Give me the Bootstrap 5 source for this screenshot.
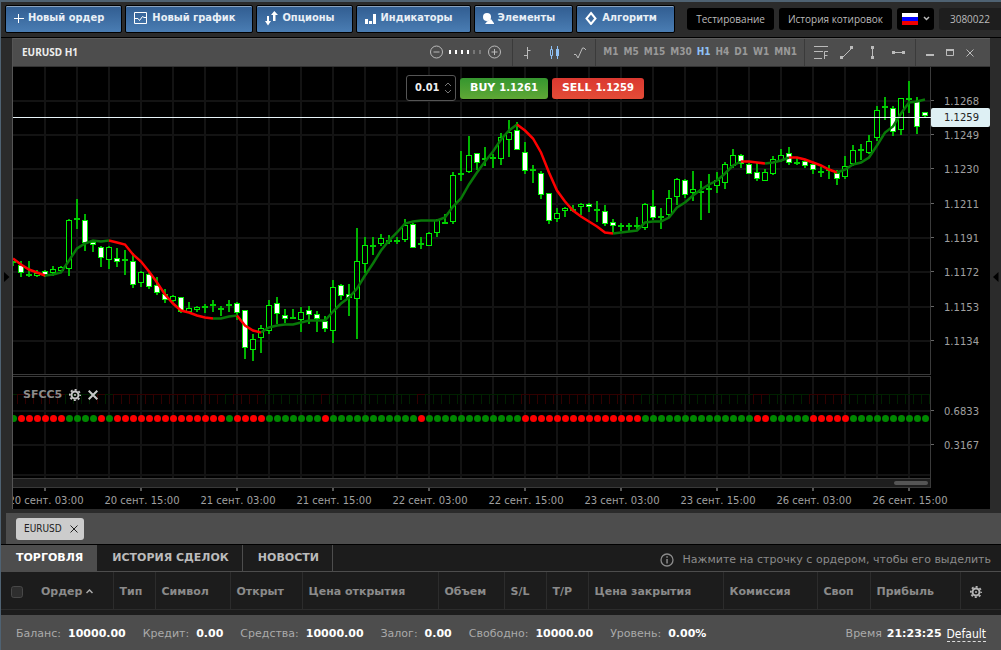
<!DOCTYPE html>
<html lang="ru">
<head>
<meta charset="utf-8">
<meta name="viewport" content="width=device-width, initial-scale=1">
<title>EURUSD H1</title>
<link href="https://cdn.jsdelivr.net/npm/bootstrap@5.3.0/dist/css/bootstrap.min.css" rel="stylesheet">
<style>
  :root { --wide: "DejaVu Sans", Verdana, sans-serif; --cond: "DejaVu Sans Condensed", Tahoma, sans-serif; --open: "Open Sans", sans-serif; }
  body { font: 11px/16px var(--wide); background: #2b2b2b; color: #aaa; border-top: 2px solid #4f6272; border-left: 1px solid #4f6272; overflow: hidden; }
  button { font: inherit; }
  svg { display: block; flex: none; }
  .plain { background: none; border: 0; padding: 0; color: inherit; }

  .topbar { height: 36px; border-bottom: 1px solid #000; padding: 3px 0 5px 4px; gap: 3px; }
  .btn-tool { --bs-btn-border-radius: 2px; height: 28px; padding: 0 17px 1px 8px; gap: 4px; color: #e8eff6; border: 1px solid #000; box-shadow: inset 0 1px 0 #8aa3bf;
    background: linear-gradient(#315d91, #4a7db3); font: bold 11px/16px var(--cond); }
  .btn-tool:hover { color: #fff; border-color: #000; }
  .btn-dark2 { height: 22px; padding: 0 9px; background: #000; color: #bbb; font: 10px/16px var(--open); border: 0; border-radius: 3px; }
  .btn-dark2:hover { background: #111; color: #ddd; }
  .btn-dark2.account { background: #1e1e1e; padding: 0 11px; border-radius: 3px 0 0 3px; }
  .links { gap: 5px; }

  .workspace { min-height: 0; }
  .rail { width: 11px; padding-top: 7px; }
  .stage { border-left: 1px solid #555; background: #000; }
  .toolbar { height: 29px; background: #4d4d4d; border-bottom: 1px solid #333; border-top: 1px solid #5c5c5c; padding-left: 9px; }
  .toolbar h1 { font: bold 10px/16px "Noto Sans", sans-serif; color: #eee; padding-bottom: 1px; }
  .zoomer { padding-right: 6px; }
  .grp { border-left: 1px solid #3a3a3a; padding-right: 2px; padding-left: 2px; }
  .grp.drawing { padding: 0 3px 0 3px; }
  .grp.windows { padding: 0 10px 0 4px; }
  .cell { width: 26px; display: flex; align-items: center; justify-content: center; }
  .cell.win { width: 20px; }
  .grp.frames { font: bold 10px/16px var(--cond); color: #999; gap: 5px; padding: 0 7px 1px 7px; }
  .frames .on { color: #8fc1f5; }
  .chart { min-height: 0; }
  .chart text { font: 10px var(--wide); fill: #a0a0a0; }
  .trade { position: absolute; top: 8px; right: 346px; gap: 4px; }
  .lot { width: 50px; height: 26px; background: #000; border: 1px solid #555; border-radius: 3px; padding: 0 4px 0 8px; }
  .lot input { width: 28px; background: none; border: 0; padding: 0; color: #eee; font: bold 11px/16px var(--cond); }
  .deal { height: 21px; padding: 0 10px; border: 0; border-radius: 3px; color: #fff; font: bold 10px/16px var(--wide); gap: 4px; }
  .deal b { font-size: 11px; }
  .buy { background: linear-gradient(#35962f, #60a836); }
  .sell { background: linear-gradient(#da3830, #e44c37); }
  .study { position: absolute; top: 320px; left: 10px; font-weight: bold; color: #8b8b8b; gap: 7px; }

  .docs { height: 31px; margin: 4px 0 0 5px; padding: 0 10px; background: #4d4d4d; }
  .doc { height: 22px; padding: 0 6px 0 8px; gap: 8px; background: #ccc; color: #222; border-radius: 3px; font: 10px/16px var(--cond); }
  .panel { background: #1c1c1c; border-top: 1px solid #000; }
  .panel .nav { height: 27px; border-bottom: 1px solid #4d4d4d; }
  .panel .nav-link { height: 26px; padding: 5px 13px 5px 15px; border-right: 1px solid #4d4d4d; border-radius: 0; color: #bbb; font: bold 11px/16px var(--wide); }
  .panel .nav-link.active { background: #4d4d4d; color: #fff; }
  .hint { gap: 9px; padding-right: 10px; color: #8b8b8b; padding-top: 3px; }
  .orders { table-layout: fixed; width: 100%; }
  .orders th { height: 37px; padding: 2px 0 0 6px; border-right: 1px solid #2c2c2c; color: #8b8b8b; white-space: nowrap; vertical-align: middle; }
  .orders th:last-child { border-right: 0; padding-left: 5px; }
  .orders input { display: block; width: 12px; height: 12px; margin: 0 0 0 4px; background-color: #2e2e2e; border: 1px solid #484848; border-radius: 2px; }
  .gapline { height: 6px; background: #1c1c1c; border-top: 1px solid #2c2c2c; }
  .status { height: 35px; background: #4d4d4d; padding: 3px 15px 0; gap: 17px; }
  .status b { color: #fff; margin-left: 7px; }
  .status .clock { margin-left: 5px; }
  .layout { color: #fff; font: 12px/14px var(--cond); border-bottom: 1px dashed #ddd; margin-left: 5px; text-decoration: none; }
</style>
</head>
<body class="vh-100 d-flex flex-column">

<header class="topbar d-flex align-items-center flex-shrink-0">
  <button class="btn btn-tool d-flex align-items-center"><svg width="10" height="12"><path d="M0 6.5h10M4.5 2v9" stroke="#fff"/></svg>Новый ордер</button>
  <button class="btn btn-tool d-flex align-items-center"><svg width="14" height="12"><path d="M.5.5h12v11H.5zM1 6.5h3l1.500 2 3-4 1.500 1h2" fill="none" stroke="#fff"/></svg>Новый график</button>
  <button class="btn btn-tool d-flex align-items-center"><svg width="13" height="16"><path d="M2 6h2v5h2l-3 4.500-3-4.500h2zM8 11h2.500V5H13L9.300 1 6 5h2z" fill="#fff"/></svg>Опционы</button>
  <button class="btn btn-tool d-flex align-items-center"><svg width="12" height="12"><path d="M0 7h3v5H0zM4 9h3v3H4zM8 2h3v10H8z" fill="#fff"/></svg>Индикаторы</button>
  <button class="btn btn-tool d-flex align-items-center"><svg width="11" height="12"><circle cx="4" cy="5" r="4" fill="#fff"/><path d="M8 7l3.500 5H2l2-2.500z" fill="#fff"/></svg>Элементы</button>
  <button class="btn btn-tool d-flex align-items-center"><svg width="13" height="14"><path d="M6 2l4.500 5.500L6 13 1.500 7.500z" fill="none" stroke="#fff" stroke-width="2"/></svg>Алгоритм</button>
  <div class="links d-flex ms-auto align-items-center">
    <button class="btn-dark2">Тестирование</button>
    <button class="btn-dark2">История котировок</button>
    <button class="btn-dark2 d-flex align-items-center gap-1 px-1" aria-label="Русский"><svg width="18" height="12"><path d="M1 0h16v4H1z" fill="#fff"/><path d="M1 4h16v4H1z" fill="#00f"/><path d="M1 8h16v4H1z" fill="#e00"/></svg><svg width="7" height="5"><path d="M1 1l2.500 2.500L6 1" fill="none" stroke="#bbb" stroke-width="1.500"/></svg></button>
    <button class="btn-dark2 account">3080022</button>
  </div>
</header>

<main class="workspace d-flex flex-grow-1">
  <button class="rail plain flex-shrink-0 d-flex align-items-center" aria-label="Развернуть слева"><svg width="9" height="10"><path d="M3 0l5.500 5L3 10z" fill="#000"/></svg></button>
  <section class="stage flex-grow-1 d-flex flex-column">
    <div class="toolbar d-flex flex-shrink-0">
      <h1 class="m-0 me-auto align-self-center">EURUSD H1</h1>
      <div class="zoomer d-flex align-items-center gap-1">
        <button class="plain" aria-label="Уменьшить"><svg width="16" height="15"><g fill="none" stroke="#bbb"><circle cx="7.500" cy="7" r="6"/><path d="M4.500 7h6"/></g></svg></button>
        <svg width="33" height="5"><path d="M0 0h2v4H0zM6 0h2v4H6zM12 0h2v4h-2zM18 0h2v4h-2z" fill="#fff"/><path d="M24 0h2v4h-2zM30 0h2v4h-2z" fill="#777"/></svg>
        <button class="plain pe-1" aria-label="Увеличить"><svg width="16" height="15"><g fill="none" stroke="#bbb"><circle cx="8.500" cy="7" r="6"/><path d="M5.500 7h6M8.500 4v6"/></g></svg></button>
      </div>
      <div class="grp d-flex align-items-stretch">
        <button class="plain cell" aria-label="Бары"><svg width="8" height="14"><path d="M3.500 1v12M0 9.500h3.500M3.500 4.500h3" stroke="#bbb"/></svg></button>
        <button class="plain cell" aria-label="Свечи"><svg width="11" height="14"><path d="M2.500 0v3M2.500 10v3M1.500 3.500h2v6h-2z" stroke="#8fc1f5" fill="none"/><path d="M8.500 0v13" stroke="#8fc1f5"/><path d="M7 3h3v7H7z" fill="#8fc1f5"/></svg></button>
        <button class="plain cell" aria-label="Линия"><svg width="13" height="14"><path d="M0 8.500h2L4 12 8.500 2H10l2 2" stroke="#bbb" fill="none"/></svg></button>
      </div>
      <div class="grp frames d-flex align-items-center">
        <button class="plain">M1</button><button class="plain">M5</button><button class="plain">M15</button><button class="plain">M30</button><button class="plain on">H1</button><button class="plain">H4</button><button class="plain">D1</button><button class="plain">W1</button><button class="plain">MN1</button>
      </div>
      <div class="grp drawing d-flex">
        <button class="plain cell" aria-label="Фибоначчи"><svg width="15" height="14"><path d="M0 .5h14M0 5.500h9M0 12.500h8M10.500 13V5.500H14M10.500 9.500h3" stroke="#bbb" fill="none"/></svg></button>
        <button class="plain cell" aria-label="Трендовая линия"><svg width="14" height="14"><path d="M2 12L12 2" stroke="#bbb"/><path d="M0 10h3v3H0zM10 0h3v3h-3z" fill="#bbb"/></svg></button>
        <button class="plain cell" aria-label="Вертикальная линия"><svg width="4" height="14"><path d="M1.500 0v13" stroke="#bbb"/><path d="M0 0h3v3H0zM0 10h3v3H0z" fill="#bbb"/></svg></button>
        <button class="plain cell" aria-label="Горизонтальная линия"><svg width="14" height="4"><path d="M0 1.500h13" stroke="#bbb"/><path d="M0 0h3v3H0zM10 0h3v3h-3z" fill="#bbb"/></svg></button>
      </div>
      <div class="grp windows d-flex">
        <button class="plain cell win" aria-label="Свернуть"><svg width="8" height="9"><path d="M0 6h8v2H0z" fill="#bbb"/></svg></button>
        <button class="plain cell win" aria-label="Развернуть"><svg width="8" height="8"><path d="M.5 1v5.500h7V1" stroke="#bbb" fill="none"/><path d="M0 0h8v2H0z" fill="#bbb"/></svg></button>
        <button class="plain cell win" aria-label="Закрыть"><svg width="8" height="8"><path d="M.5.5l7 7m0-7l-7 7" stroke="#bbb"/></svg></button>
      </div>
    </div>
    <div class="chart flex-grow-1 position-relative">
      <svg id="plot" width="100%" height="100%" viewBox="13 67 977 442" preserveAspectRatio="xMaxYMin meet" role="img" aria-label="График EURUSD"></svg>
      <div class="trade d-flex align-items-center">
        <label class="lot d-flex align-items-center justify-content-between"><input type="text" value="0.01" aria-label="Объем"><svg width="6" height="12"><path d="M0 4l3-3 3 3M0 8l3 3 3-3" stroke="#777" fill="none"/></svg></label>
        <button class="deal buy d-flex align-items-center"><b>BUY</b>1.1261</button>
        <button class="deal sell d-flex align-items-center"><b>SELL</b>1.1259</button>
      </div>
      <div class="study d-flex align-items-center">
        <span>SFCC5</span>
        <button class="plain" aria-label="Настройки индикатора"><svg width="12" height="12" viewBox="-6 -6 12 12"><g fill="none" stroke="#c8c8c8"><circle r="3.500" stroke-width="2"/><circle r="5.200" stroke-width="1.800" stroke-dasharray="2 2.084" stroke-dashoffset="1"/></g><circle r="1" fill="#c8c8c8"/></svg></button>
        <button class="plain" aria-label="Удалить индикатор"><svg width="10" height="10"><path d="M.7.700l8.600 8.600m0-8.600L.7 9.300" stroke="#c8c8c8" stroke-width="2"/></svg></button>
      </div>
    </div>
  </section>
  <button class="rail plain flex-shrink-0 d-flex align-items-center" aria-label="Развернуть справа"><svg width="9" height="10"><path d="M8.500 0L3 5l5.500 5z" fill="#000"/></svg></button>
</main>

<div class="docs d-flex align-items-center flex-shrink-0">
  <button class="doc d-flex align-items-center border-0">EURUSD<svg width="8" height="8"><path d="M.5.5l7 7m0-7l-7 7" stroke="#222"/></svg></button>
</div>

<section class="panel flex-shrink-0">
  <nav class="nav flex-nowrap">
    <a class="nav-link active" href="#trade">ТОРГОВЛЯ</a>
    <a class="nav-link" href="#history">ИСТОРИЯ СДЕЛОК</a>
    <a class="nav-link" href="#news">НОВОСТИ</a>
    <span class="hint ms-auto d-flex align-items-center"><svg width="14" height="14"><circle cx="7" cy="7" r="6" fill="none" stroke="#8b8b8b" stroke-width="1.300"/><path d="M6.300 6h1.500v4.500H6.300zM6.300 3.300h1.500v1.500H6.300z" fill="#8b8b8b"/></svg>Нажмите на строчку с ордером, чтобы его выделить</span>
  </nav>
  <table class="orders">
    <colgroup><col style="width:34px"><col style="width:78px"><col style="width:42px"><col style="width:75px"><col style="width:72px"><col style="width:136px"><col style="width:66px"><col style="width:42px"><col style="width:42px"><col><col style="width:94px"><col style="width:53px"><col style="width:90px"><col style="width:41px"></colgroup>
    <thead><tr>
      <th class="border-end-0"><input class="form-check-input" type="checkbox" aria-label="Выбрать все"></th>
      <th><span class="d-flex align-items-center gap-1">Ордер<svg width="7" height="5"><path d="M.5 4l3-3 3 3" stroke="#aaa" stroke-width="1.500" fill="none"/></svg></span></th>
      <th>Тип</th><th>Символ</th><th>Открыт</th><th>Цена открытия</th><th>Объем</th><th>S/L</th><th>T/P</th><th>Цена закрытия</th><th>Комиссия</th><th>Своп</th><th>Прибыль</th>
      <th><button class="plain d-block ms-1" aria-label="Настройки таблицы"><svg width="12" height="12" viewBox="-6 -6 12 12"><g fill="none" stroke="#b5b5b5"><circle r="3.500" stroke-width="2"/><circle r="5.200" stroke-width="1.800" stroke-dasharray="2 2.084" stroke-dashoffset="1"/></g><circle r="1" fill="#b5b5b5"/></svg></button></th>
    </tr></thead>
  </table>
  <div class="gapline"></div>
</section>

<footer class="status d-flex align-items-center flex-shrink-0">
  <span>Баланс:<b>10000.00</b></span><span>Кредит:<b>0.00</b></span><span>Средства:<b>10000.00</b></span><span>Залог:<b>0.00</b></span><span>Свободно:<b>10000.00</b></span><span>Уровень:<b>0.00%</b></span>
  <span class="ms-auto d-flex align-items-center">Время<b class="clock">21:23:25</b><a class="layout" href="#layout">Default</a></span>
</footer>

<script>
// One row per bar: high, body top, body bottom, low, kind (f falling, o rising, d doji)
const bars = `261 262 264 266 d|261 265 273 277 f|261 275 275 277 d|270 273 276 277 o|270 271 275 277 f|266 269 273 276 o|266 267 271 272 o|219 220 269 276 o|199 219 219 229 d|214 220 243 251 f|241 242 245 252 f|246 247 258 267 f|246 247 260 269 o|248 258 262 267 f|250 260 260 275 d|253 261 285 288 f|271 272 283 287 o|273 274 287 289 f|277 285 293 295 f|289 294 300 303 f|295 296 301 302 o|297 297 312 313 f|302 308 312 312 o|306 307 310 312 o|304 307 307 313 d|300 305 305 312 d|306 309 309 316 d|300 305 305 312 d|302 303 313 320 f|310 310 348 359 f|334 339 350 361 o|325 328 338 353 o|300 305 331 334 o|297 303 314 324 f|309 315 319 323 f|309 318 318 319 d|307 312 320 332 o|306 310 315 324 f|311 314 319 332 f|316 321 329 332 f|280 287 331 343 o|284 285 296 300 f|284 294 298 316 f|228 261 299 339 o|237 245 264 273 o|237 246 246 255 d|234 238 244 246 o|235 241 241 244 d|237 241 241 244 d|219 225 240 242 o|223 224 248 248 f|237 244 244 249 d|232 233 246 246 o|219 220 233 237 o|214 223 223 224 d|172 175 222 224 o|151 174 174 181 d|136 155 172 173 o|153 153 163 170 f|147 159 159 166 d|154 158 158 168 d|133 137 159 165 o|120 132 140 157 o|122 130 150 150 f|142 152 171 174 f|165 170 170 183 d|171 173 195 199 f|193 193 221 224 f|208 213 219 222 o|207 208 211 217 o|205 210 210 212 d|203 204 207 215 o|203 204 207 212 f|201 210 210 222 d|205 211 224 226 f|219 222 226 233 f|223 226 226 231 d|223 226 226 231 d|217 226 226 229 d|203 204 228 230 o|190 206 218 220 f|208 217 217 229 d|190 198 215 217 o|178 179 197 205 o|179 180 195 198 f|171 189 193 201 o|181 192 192 220 d|174 189 189 213 d|172 180 186 193 o|162 164 183 189 o|149 155 166 168 o|154 155 164 168 f|163 164 174 174 f|162 172 179 181 f|169 172 181 181 o|156 159 174 175 o|149 155 161 162 o|147 153 163 165 f|158 163 163 165 d|160 161 166 168 f|163 164 170 174 f|167 172 172 177 d|165 170 170 179 d|170 173 179 185 f|156 166 177 179 o|145 150 164 166 o|144 150 150 160 d|135 141 153 154 o|106 110 138 141 o|97 107 107 120 d|106 108 132 136 f|98 98 130 135 o|81 99 99 113 d|97 101 127 134 f|112 112 116 117 f`.split('|').map(r => r.split(' '));
const ma = [258,264,269,272,275,274,272,260,248,243,240,241,240,242,244,254,261,271,282,294,303,310,312,315,317,318,318,316,315,325,330,332,327,325,324,324,322,320,320,320,311,303,297,288,275,263,250,240,232,223,221,220,220,220,217,206,198,184,172,161,151,139,130,124,130,138,152,172,190,201,210,216,221,226,232,233,232,231,230,222,221,221,217,207,202,195,189,184,180,173,165,161,161,162,163,162,160,157,157,159,162,165,169,172,169,164,162,157,145,132,126,113,102,101,99];
const maTurns = [[0,4,'r'],[4,12,'g'],[12,25,'r'],[25,28,'g'],[28,31,'r'],[31,63,'g'],[63,75,'r'],[75,91,'g'],[91,94,'r'],[94,97,'g'],[97,103,'r'],[103,114,'g']];
const dots = [[1,6],[11,11],[13,26],[28,31],[39,39],[51,51],[64,78],[93,94],[100,104]];
const X = k => 13 + 8 * k;
const line = (d, c, w = 1) => `<path d="${d}" stroke="${c}" stroke-width="${w}" fill="none"/>`;
let s = '<defs><clipPath id="area"><path d="M13 67H930V509H13z"/></clipPath></defs>';

for (let x = 45; x < 930; x += 32) s += line(`M${x} 67V374M${x} 377V478`, '#131313', 2);
for (const y of [101,135,169,204,238,272,307,341,411,445,475]) s += line(`M13 ${y}H930`, '#131313', 2);

s += '<g clip-path="url(#area)">';
bars.forEach(([h, t, b, l, k], i) => {
  const x = X(i);
  s += line(`M${x} ${h}V${t}M${x} ${b}V${l}`, '#00b400', 2);
  if (k === 'd') s += line(`M${x} ${h}V${l}`, '#00b400', 2) + line(`M${x - 3} ${t}h6`, '#00d000', 2);
  else s += `<rect x="${x - 2.5}" y="${+t + .5}" width="5" height="${Math.max(b - t - 1, 2)}" fill="${k === 'f' ? '#fff' : '#000'}" stroke="#00f000"/>`;
});
for (const [a, b, c] of maTurns) {
  let d = '';
  for (let i = a; i <= b; i++) d += (i === a ? 'M' : 'L') + X(i) + ' ' + (ma[i] + .5);
  s += line(d, c === 'r' ? '#f00' : '#087808', 2.5);
}
for (let i = 0; i < 115; i++) {
  const red = dots.some(([a, b]) => i >= a && i <= b);
  s += line(`M${X(i) - 4} 394.5h8M${X(i) - 3.5} 394V404M${X(i) + 4.5} 394V404`, red ? '#300000' : '#002000');
  s += `<circle cx="${X(i) + .5}" cy="418.5" r="3.500" fill="${red ? '#f00' : '#080'}"/>`;
}
s += '</g>';

s += line('M13 374.5H930M13 376.5H930', '#3a3a3a') + '<path d="M13 478h917v10H13z" fill="#1e1e1e"/>';
s += line('M13 478.5H930M13 487.5H931', '#3a3a3a') + '<rect x="894" y="481" width="34" height="4" rx="2" fill="#555"/>';
s += line('M930.500 67V375M930.500 376V488', '#3a3a3a') + line('M13 117.5H931', '#e8f4f8');
[['1.1268',101],['1.1249',135],['1.1230',169],['1.1211',204],['1.1191',238],['1.1172',272],['1.1153',307],['1.1134',341],['0.6833',411],['0.3167',445]].forEach(([t, y]) => {
  s += line(`M931 ${y - .5}h3`, '#666') + `<text x="944" y="${y + 4}">${t}</text>`;
});
s += '<rect x="931" y="108" width="59" height="19" rx="2" fill="#def0f4"/><text x="944" y="121" style="fill:#222">1.1259</text>';
['20 сент. 03:00','20 сент. 15:00','21 сент. 03:00','21 сент. 15:00','22 сент. 03:00','22 сент. 15:00','23 сент. 03:00','23 сент. 15:00','26 сент. 03:00','26 сент. 15:00'].forEach((t, i) => {
  const x = 45 + 96 * i;
  s += line(`M${x} 488v3`, '#555', 2) + `<text x="${x + 1}" y="504" text-anchor="middle">${t}</text>`;
});
document.getElementById('plot').innerHTML = s;
</script>
<script src="https://cdn.jsdelivr.net/npm/bootstrap@5.3.0/dist/js/bootstrap.bundle.min.js"></script>
</body>
</html>
